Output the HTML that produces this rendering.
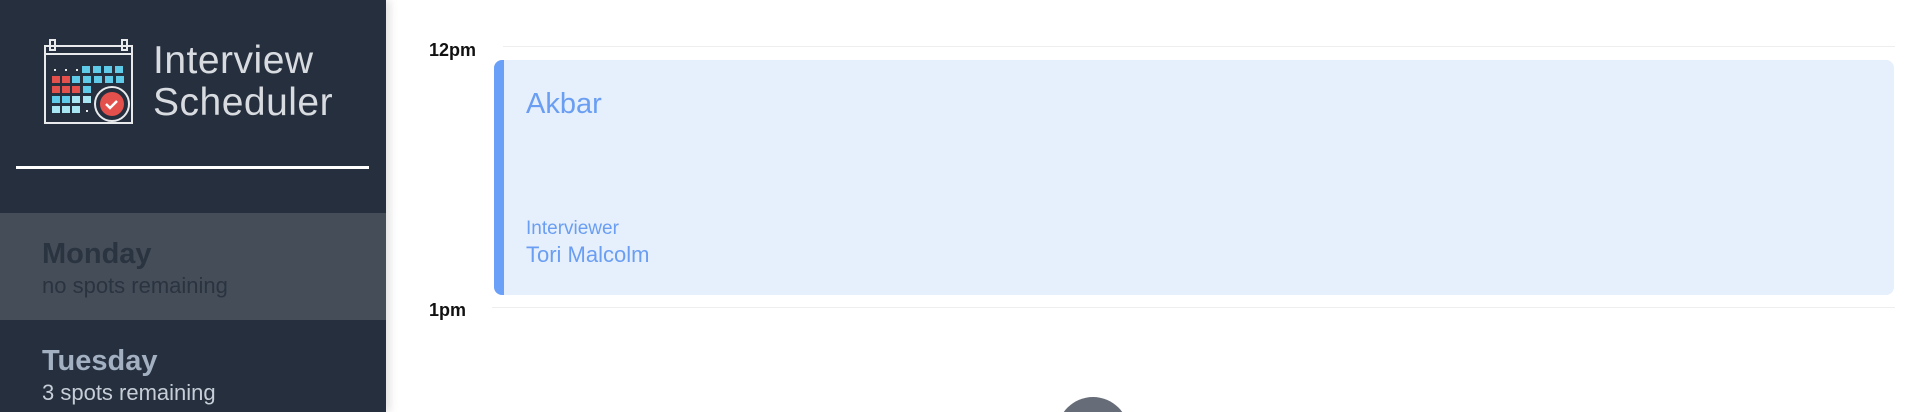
<!DOCTYPE html>
<html><head><meta charset="utf-8"><style>
*{margin:0;padding:0;box-sizing:border-box}
html,body{width:1906px;height:412px;overflow:hidden}
body{background:#fff;font-family:"Liberation Sans",sans-serif;position:relative}
.side{position:absolute;left:0;top:0;width:386px;height:412px;background:#252f3e;box-shadow:4px 0 8px rgba(0,0,0,.12);overflow:hidden}
.title{position:absolute;left:153px;top:40px;color:#d8dbe0;font-size:39px;font-weight:300;line-height:42px;letter-spacing:.5px}
.hr{position:absolute;left:16px;top:166px;width:353px;height:3px;background:#fff}
.day{position:absolute;left:0;width:386px;height:107px;padding:24px 0 0 42px}
.day b{display:block;font-size:29px;line-height:34px}
.day span{display:block;font-size:22px;line-height:30px;font-weight:300}
.t{position:absolute;font-weight:bold;font-size:18px;color:#111}
.line{position:absolute;height:1px;background:#eee}
.card{position:absolute;left:494px;top:60px;width:1400px;height:235px;background:#e6effc;border-left:10px solid #6aa0f8;border-radius:8px;color:#6a9ef2}
</style></head><body>
<div class="side">
<svg style="position:absolute;left:40px;top:36px" width="96" height="90" viewBox="0 0 96 90">
<g fill="none" stroke="#e8eaec" stroke-width="2">
<rect x="5" y="10" width="87" height="77"/>
<line x1="5" y1="18" x2="92" y2="18"/>
<rect x="10" y="4" width="5" height="10"/><rect x="82" y="4" width="5" height="10"/>
</g>
<g fill="#e8eaec"><rect x="14" y="33" width="2" height="2"/><rect x="25" y="33" width="2" height="2"/><rect x="36" y="33" width="2" height="2"/><rect x="46" y="74" width="2" height="2"/></g>
<g fill="#5fcbe9">
<rect x="42" y="30" width="8" height="7"/><rect x="53" y="30" width="8" height="7"/><rect x="64" y="30" width="8" height="7"/><rect x="75" y="30" width="8" height="7"/>
<rect x="32" y="40" width="8" height="7"/><rect x="43" y="40" width="8" height="7"/><rect x="54" y="40" width="8" height="7"/><rect x="65" y="40" width="8" height="7"/><rect x="76" y="40" width="8" height="7"/>
<rect x="43" y="50" width="8" height="7"/>
<rect x="12" y="60" width="8" height="7"/><rect x="22" y="60" width="8" height="7"/>
</g>
<g fill="#e4504c"><rect x="12" y="40" width="8" height="7"/><rect x="22" y="40" width="8" height="7"/>
<rect x="12" y="50" width="8" height="7"/><rect x="22" y="50" width="8" height="7"/><rect x="32" y="50" width="8" height="7"/></g>
<g fill="#a9e6f4"><rect x="32" y="60" width="8" height="7"/><rect x="43" y="60" width="8" height="7"/>
<rect x="12" y="70" width="8" height="7"/><rect x="22" y="70" width="8" height="7"/><rect x="32" y="70" width="8" height="7"/></g>
<circle cx="72" cy="68" r="17" fill="#252f3e" stroke="#e8eaec" stroke-width="2"/>
<circle cx="72" cy="68" r="12" fill="#e4504c"/>
<path d="M66 68l4 4 7-7" fill="none" stroke="#fff" stroke-width="2.5"/>
</svg>
<div class="title">Interview<br>Scheduler</div>
<div class="hr"></div>
<div class="day" style="top:213px;background:#454d59;color:#2a3340"><b>Monday</b><span>no spots remaining</span></div>
<div class="day" style="top:320px;height:92px;color:#a3b0c2"><b>Tuesday</b><span style="color:#c7ced8">3 spots remaining</span></div>
</div>
<div class="t" style="left:429px;top:40px">12pm</div>
<div class="line" style="left:503px;top:46px;width:1392px"></div>
<div class="card">
<div style="position:absolute;left:22px;top:28px;font-size:29px">Akbar</div>
<div style="position:absolute;left:22px;top:158px;font-size:19px;font-weight:300">Interviewer</div>
<div style="position:absolute;left:22px;top:182px;font-size:22px">Tori Malcolm</div>
</div>
<div class="t" style="left:429px;top:300px">1pm</div>
<div class="line" style="left:492px;top:307px;width:1403px"></div>
<div style="position:absolute;left:1057px;top:397px;width:72px;height:15px;overflow:hidden"><div style="width:72px;height:72px;border-radius:50%;background:#666d78"></div></div>
</body></html>
